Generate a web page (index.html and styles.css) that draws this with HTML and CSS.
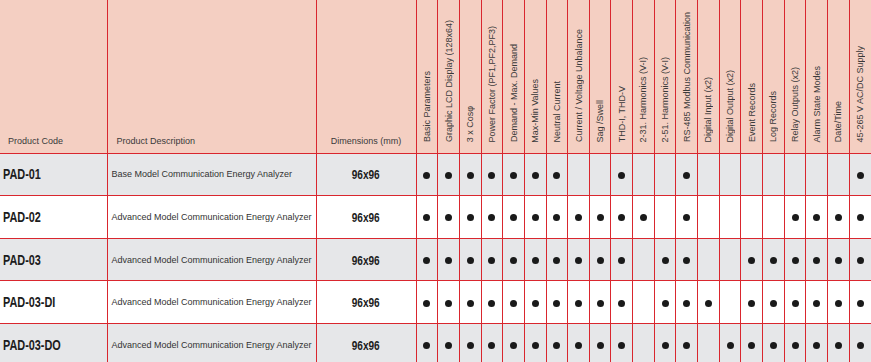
FILE: index.html
```html
<!DOCTYPE html>
<html>
<head>
<meta charset="utf-8">
<link rel="stylesheet" href="styles.css">
</head>
<body>
<table class="grid">
  <colgroup>
    <col class="c-code"><col class="c-desc"><col class="c-dim">
    <col class="c-f"><col class="c-f"><col class="c-f"><col class="c-f"><col class="c-f"><col class="c-f"><col class="c-f">
    <col class="c-f"><col class="c-f"><col class="c-f"><col class="c-f"><col class="c-f"><col class="c-f"><col class="c-f">
    <col class="c-f"><col class="c-f"><col class="c-f"><col class="c-f"><col class="c-f"><col class="c-f"><col class="c-f">
  </colgroup>
  <thead>
    <tr class="head">
      <th class="h-left h-code">Product Code</th>
      <th class="h-left h-desc">Product Description</th>
      <th class="h-center">Dimensions (mm)</th>
      <th><span class="vt">Basic Parameters</span></th>
      <th><span class="vt">Graphic LCD Display (128x64)</span></th>
      <th><span class="vt">3 x Cosφ</span></th>
      <th><span class="vt">Power Factor (PF1,PF2,PF3)</span></th>
      <th><span class="vt">Demand - Max. Demand</span></th>
      <th><span class="vt">Max-Min Values</span></th>
      <th><span class="vt">Neutral Current</span></th>
      <th><span class="vt">Current / Voltage Unbalance</span></th>
      <th><span class="vt">Sag /Swell</span></th>
      <th><span class="vt">THD-I, THD-V</span></th>
      <th><span class="vt">2-31. Harmonics (V-I)</span></th>
      <th><span class="vt">2-51. Harmonics (V-I)</span></th>
      <th><span class="vt">RS-485 Modbus Communication</span></th>
      <th><span class="vt">Digital Input (x2)</span></th>
      <th><span class="vt">Digital Output (x2)</span></th>
      <th><span class="vt">Event Records</span></th>
      <th><span class="vt">Log Records</span></th>
      <th><span class="vt">Relay Outputs (x2)</span></th>
      <th><span class="vt">Alarm State Modes</span></th>
      <th><span class="vt">Date/Time</span></th>
      <th><span class="vt">45-265 V AC/DC Supply</span></th>
    </tr>
  </thead>
  <tbody>
    <tr class="row gray">
      <td class="code"><span class="cond">PAD-01</span></td>
      <td class="desc">Base Model Communication Energy Analyzer</td>
      <td class="dim"><span class="cond-c">96x96</span></td>
      <td><i class="dot"></i></td><td><i class="dot"></i></td><td><i class="dot"></i></td><td><i class="dot"></i></td><td><i class="dot"></i></td><td><i class="dot"></i></td><td><i class="dot"></i></td>
      <td></td><td></td><td><i class="dot"></i></td><td></td><td></td><td><i class="dot"></i></td><td></td>
      <td></td><td></td><td></td><td></td><td></td><td></td><td><i class="dot"></i></td>
    </tr>
    <tr class="row white">
      <td class="code"><span class="cond">PAD-02</span></td>
      <td class="desc">Advanced Model Communication Energy Analyzer</td>
      <td class="dim"><span class="cond-c">96x96</span></td>
      <td><i class="dot"></i></td><td><i class="dot"></i></td><td><i class="dot"></i></td><td><i class="dot"></i></td><td><i class="dot"></i></td><td><i class="dot"></i></td><td><i class="dot"></i></td>
      <td><i class="dot"></i></td><td><i class="dot"></i></td><td><i class="dot"></i></td><td><i class="dot"></i></td><td></td><td><i class="dot"></i></td><td></td>
      <td></td><td></td><td></td><td><i class="dot"></i></td><td><i class="dot"></i></td><td><i class="dot"></i></td><td><i class="dot"></i></td>
    </tr>
    <tr class="row gray">
      <td class="code"><span class="cond">PAD-03</span></td>
      <td class="desc">Advanced Model Communication Energy Analyzer</td>
      <td class="dim"><span class="cond-c">96x96</span></td>
      <td><i class="dot"></i></td><td><i class="dot"></i></td><td><i class="dot"></i></td><td><i class="dot"></i></td><td><i class="dot"></i></td><td><i class="dot"></i></td><td><i class="dot"></i></td>
      <td><i class="dot"></i></td><td><i class="dot"></i></td><td><i class="dot"></i></td><td></td><td><i class="dot"></i></td><td><i class="dot"></i></td><td></td>
      <td></td><td><i class="dot"></i></td><td><i class="dot"></i></td><td><i class="dot"></i></td><td><i class="dot"></i></td><td><i class="dot"></i></td><td><i class="dot"></i></td>
    </tr>
    <tr class="row white">
      <td class="code"><span class="cond">PAD-03-DI</span></td>
      <td class="desc">Advanced Model Communication Energy Analyzer</td>
      <td class="dim"><span class="cond-c">96x96</span></td>
      <td><i class="dot"></i></td><td><i class="dot"></i></td><td><i class="dot"></i></td><td><i class="dot"></i></td><td><i class="dot"></i></td><td><i class="dot"></i></td><td><i class="dot"></i></td>
      <td><i class="dot"></i></td><td><i class="dot"></i></td><td><i class="dot"></i></td><td></td><td><i class="dot"></i></td><td><i class="dot"></i></td><td><i class="dot"></i></td>
      <td></td><td><i class="dot"></i></td><td><i class="dot"></i></td><td><i class="dot"></i></td><td><i class="dot"></i></td><td><i class="dot"></i></td><td><i class="dot"></i></td>
    </tr>
    <tr class="row gray">
      <td class="code"><span class="cond">PAD-03-DO</span></td>
      <td class="desc">Advanced Model Communication Energy Analyzer</td>
      <td class="dim"><span class="cond-c">96x96</span></td>
      <td><i class="dot"></i></td><td><i class="dot"></i></td><td><i class="dot"></i></td><td><i class="dot"></i></td><td><i class="dot"></i></td><td><i class="dot"></i></td><td><i class="dot"></i></td>
      <td><i class="dot"></i></td><td><i class="dot"></i></td><td><i class="dot"></i></td><td></td><td><i class="dot"></i></td><td><i class="dot"></i></td><td></td>
      <td><i class="dot"></i></td><td><i class="dot"></i></td><td><i class="dot"></i></td><td><i class="dot"></i></td><td><i class="dot"></i></td><td><i class="dot"></i></td><td><i class="dot"></i></td>
    </tr>
  </tbody>
</table>
</body>
</html>
```
FILE: styles.css
```css
html, body {
  margin: 0;
  padding: 0;
  background: #ffffff;
}

body {
  font-family: "Liberation Sans", Arial, sans-serif;
  color: #333333;
  overflow: hidden;
}

.grid {
  border-collapse: collapse;
  table-layout: fixed;
  width: 871px;
}

.c-code { width: 107px; }
.c-desc { width: 209px; }
.c-dim { width: 100px; }
.c-f { width: 21.667px; }

.grid th,
.grid td {
  padding: 0;
  border-right: 1px solid #d9262e;
  border-bottom: 1px solid #d9262e;
  overflow: hidden;
}

.grid th:last-child,
.grid td:last-child {
  border-right: none;
}

.head {
  height: 153px;
  background: #f4cfc2;
}

.head th {
  font-weight: normal;
  font-size: 9px;
  color: #3a3a3a;
  vertical-align: bottom;
  text-align: center;
  padding-bottom: 8px;
  line-height: 10px;
}

.head .h-left {
  text-align: left;
  padding-bottom: 7px;
}

.head .h-code { padding-left: 8px; }
.head .h-desc { padding-left: 9px; }
.head .h-center { padding-bottom: 7px; }

.vt {
  display: inline-block;
  writing-mode: vertical-rl;
  transform: rotate(180deg);
  white-space: nowrap;
  line-height: 10px;
}

.row {
  height: 42.67px;
}

.gray { background: #e6e7e9; }
.white { background: #ffffff; }

.row td {
  text-align: center;
  vertical-align: middle;
}

.row td.code {
  text-align: left;
  padding-left: 3px;
}

.cond {
  display: inline-block;
  font-weight: bold;
  font-size: 14.5px;
  color: #1c1c1c;
  transform: scaleX(0.75);
  transform-origin: left center;
  white-space: nowrap;
}

.row td.desc {
  text-align: left;
  padding-left: 4px;
  font-size: 9px;
  color: #333333;
  white-space: nowrap;
}

.cond-c {
  display: inline-block;
  font-weight: bold;
  font-size: 12px;
  color: #1c1c1c;
  transform: scaleX(0.84);
  transform-origin: center center;
}

.dot {
  display: inline-block;
  width: 7px;
  height: 7px;
  border-radius: 50%;
  background: #1a1a1a;
  vertical-align: middle;
}
```
